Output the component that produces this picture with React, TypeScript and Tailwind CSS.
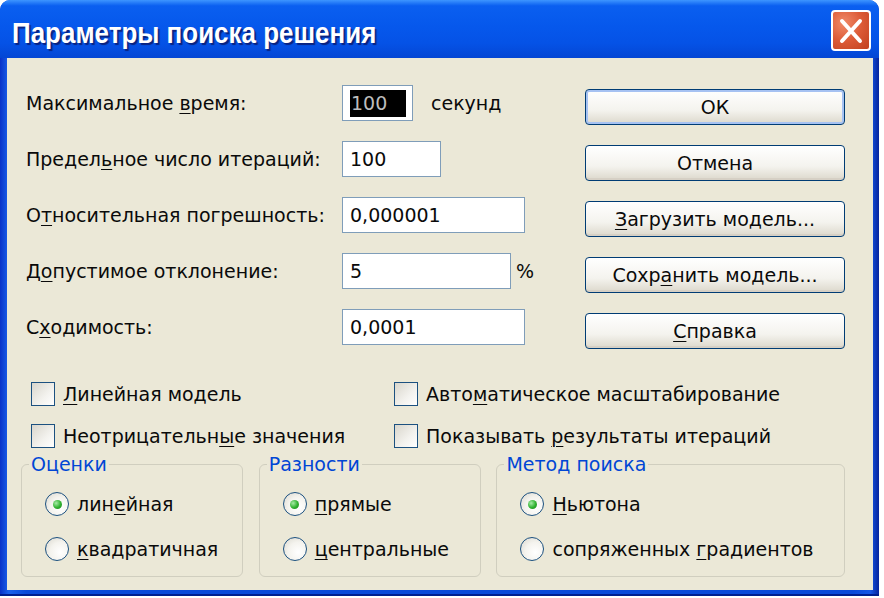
import React from "react";

const U = ({ children }: { children: React.ReactNode }) => (
  <span className="underline decoration-1 underline-offset-[3px]">{children}</span>
);

function Field({
  label,
  width,
  value,
  selected,
  after,
}: {
  label: React.ReactNode;
  width: number;
  value: string;
  selected?: boolean;
  after?: React.ReactNode;
}) {
  return (
    <div className="flex items-center h-9">
      <div className="w-[316px] whitespace-nowrap">{label}</div>
      <div
        className="h-9 border border-[#7f9db9] bg-white flex items-center"
        style={{ width }}
      >
        {selected ? (
          <span className="ml-[7px] h-[27px] w-[56px] bg-black text-[#bdbdbd] flex items-center pl-[1px]">
            {value}
          </span>
        ) : (
          <span className="pl-[7px]">{value}</span>
        )}
      </div>
      {after}
    </div>
  );
}

function Btn({ children, def }: { children: React.ReactNode; def?: boolean }) {
  return (
    <div
      className={
        "w-[260px] h-9 rounded-[4px] border border-[#003c74] bg-[linear-gradient(180deg,#ffffff_0%,#f4f3ee_60%,#dcd8cc_100%)] flex items-center justify-center whitespace-nowrap " +
        (def ? "shadow-[inset_0_0_0_2px_#a6c2f2]" : "shadow-[inset_0_-2px_0_#d6d0c5]")
      }
    >
      {children}
    </div>
  );
}

function Check({ children }: { children: React.ReactNode }) {
  return (
    <div className="flex items-center h-6 whitespace-nowrap">
      <span className="w-6 h-6 border border-[#1c5180] bg-[linear-gradient(135deg,#d9d6cc_0%,#f3f2ee_60%,#ffffff_100%)]" />
      <span className="ml-2">{children}</span>
    </div>
  );
}

function Radio({ children, checked }: { children: React.ReactNode; checked?: boolean }) {
  return (
    <div className="flex items-center h-6 whitespace-nowrap">
      <span className="w-6 h-6 rounded-full border-[1.5px] border-[#1c5180] bg-[radial-gradient(circle_at_65%_65%,#ffffff_0%,#f4f3ee_50%,#d8d5cb_100%)] flex items-center justify-center">
        {checked && (
          <span className="w-[9px] h-[9px] rounded-full bg-[radial-gradient(circle_at_35%_35%,#a6eba6_0%,#2fb12f_55%,#1a7f1a_100%)]" />
        )}
      </span>
      <span className="ml-2">{children}</span>
    </div>
  );
}

function Group({
  title,
  width,
  children,
}: {
  title: string;
  width: number;
  children: React.ReactNode;
}) {
  return (
    <div
      className="relative h-[113px] rounded-[6px] border border-[#d0cebf] pt-[27px] pl-[23px] flex flex-col gap-[21px]"
      style={{ width }}
    >
      <span className="absolute -top-[12px] left-[7px] px-[2px] bg-[#ebe8d7] text-[#0046d5] leading-[22px]">
        {title}
      </span>
      {children}
    </div>
  );
}

export default function App() {
  return (
    <div className="w-[884px] h-[598px] bg-white font-['DejaVu_Sans',sans-serif] text-[19px] text-[#0a0a0a]">
      <div className="w-[879px] h-[596px] flex flex-col rounded-t-[10px] overflow-hidden bg-[linear-gradient(90deg,#0832c8_0%,#1a62ec_1%,#0a4ad9_3%,#0a4ad9_97%,#1556e6_99%,#06249c_100%)] shadow-[inset_0_-2px_0_#002090]">
        {/* title bar */}
        <div className="h-[58px] flex items-center justify-between pl-[12px] pr-[8px] bg-[linear-gradient(180deg,#3d95ff_0%,#0a5ff0_10%,#0658ec_45%,#0552e6_75%,#0446d4_100%)]">
          <div className="pt-[9px] font-['Liberation_Sans',sans-serif] font-bold text-[29px] text-white [text-shadow:2px_2px_1px_#0a2380] inline-block origin-left scale-x-[0.895] whitespace-nowrap">
            Параметры поиска решения
          </div>
          <div className="mt-[3px] w-[40px] h-[41px] rounded-[4px] border-2 border-white bg-[radial-gradient(circle_at_30%_30%,#f08a68_0%,#dc5a36_50%,#c1411f_100%)] flex items-center justify-center">
            <svg width="26" height="26" viewBox="0 0 26 26">
              <path d="M4 3 L22 23 M22 3 L4 23" stroke="white" strokeWidth="4" strokeLinecap="round" />
            </svg>
          </div>
        </div>
        {/* client */}
        <div className="flex-1 ml-[7px] mr-[6px] mb-[6px] bg-[#ebe8d7] pt-[27px] pl-[14px] pr-[28px] flex flex-col">
          <div className="flex justify-between">
            <div className="ml-[5px] flex flex-col gap-5">
              <Field
                label={<>Максимальное <U>в</U>ремя:</>}
                width={71}
                value="100"
                selected
                after={<span className="ml-[18px]">секунд</span>}
              />
              <Field label={<>Предел<U>ь</U>ное число итераций:</>} width={99} value="100" />
              <Field label={<>О<U>т</U>носительная погрешность:</>} width={183} value="0,000001" />
              <Field
                label={<>Д<U>о</U>пустимое отклонение:</>}
                width={169}
                value="5"
                after={<span className="ml-[5px]">%</span>}
              />
              <Field label={<>С<U>х</U>одимость:</>} width={183} value="0,0001" />
            </div>
            <div className="pt-[4px] flex flex-col gap-5">
              <Btn def>ОК</Btn>
              <Btn>Отмена</Btn>
              <Btn>
                <U>З</U>агрузить модель...
              </Btn>
              <Btn>
                Сохр<U>а</U>нить модель...
              </Btn>
              <Btn>
                <U>С</U>правка
              </Btn>
            </div>
          </div>
          <div className="ml-[10px] mt-[33px] grid grid-cols-[363px_auto] gap-y-[18px]">
            <Check>
              <U>Л</U>инейная модель
            </Check>
            <Check>
              Авто<U>м</U>атическое масштабирование
            </Check>
            <Check>
              Неотрицательн<U>ы</U>е значения
            </Check>
            <Check>
              Показывать <U>р</U>езультаты итераций
            </Check>
          </div>
          <div className="mt-[16px] flex">
            <Group title="Оценки" width={222}>
              <Radio checked>
                лин<U>е</U>йная
              </Radio>
              <Radio>
                <U>к</U>вадратичная
              </Radio>
            </Group>
            <div className="w-[16px]" />
            <Group title="Разности" width={223}>
              <Radio checked>
                <U>п</U>рямые
              </Radio>
              <Radio>
                <U>ц</U>ентральные
              </Radio>
            </Group>
            <div className="w-[15px]" />
            <Group title="Метод поиска" width={349}>
              <Radio checked>
                <U>Н</U>ьютона
              </Radio>
              <Radio>
                сопряженных <U>г</U>радиентов
              </Radio>
            </Group>
          </div>
        </div>
      </div>
    </div>
  );
}
